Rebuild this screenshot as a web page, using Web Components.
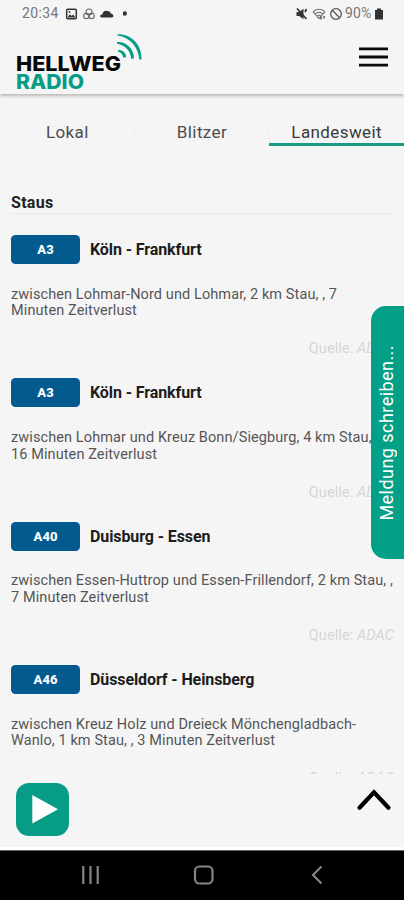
<!DOCTYPE html>
<html lang="de">
<head>
<meta charset="utf-8">
<meta name="viewport" content="width=device-width, initial-scale=1">
<title>Hellweg Radio</title>
<style>
  html, body { margin: 0; height: 100%; }
  body { background: #f5f5f5; overflow: hidden; font-family: Roboto, sans-serif; }
</style>
</head>
<body>
<radio-app></radio-app>

<script>
function define(name, html, setup) {
  const tpl = document.createElement('template');
  tpl.innerHTML = html;

  customElements.define(name, class extends HTMLElement {
    constructor() {
      super();
      this.attachShadow({ mode: 'open' }).appendChild(tpl.content.cloneNode(true));
    }

    connectedCallback() {
      if (setup) setup(this, this.shadowRoot);
    }
  });
}

define('status-bar', `
  <style>
    :host {
      display: flex;
      justify-content: space-between;
      box-sizing: border-box;
      height: 27px;
      padding: 0 20px 0 22px;
      font-size: 14px;
      line-height: 27px;
      color: #777;
    }
    div { display: flex; align-items: center; }
    svg { display: block; }
  </style>
  <div>
    <span style="width:37px;letter-spacing:.35px">20:34</span>
    <svg width="64" height="14" viewBox="0 0 64 14">
      <rect x="7.7" y="2.2" width="9.6" height="9.6" rx="1" fill="none" stroke="#333" stroke-width="1.5"/>
      <path d="M8.5 10.5 11 7.3l1.7 1.7 1.5-1.6 2.4 3.1z" fill="#333"/>
      <circle cx="10.5" cy="5" r=".9" fill="#333"/>
      <g fill="none" stroke="#666" stroke-width="1.1">
        <circle cx="30" cy="5" r="3"/><circle cx="27.4" cy="9" r="2.7"/><circle cx="32.6" cy="9" r="2.7"/>
      </g>
      <path d="M43 10.500c-3-.3-2-3 .5-3.300C44 4.300 46 3.200 48 4c2-.5 3.300.8 3.700 2.500 3 .5 3.800 4 1 4z" fill="#333"/>
    </svg>
    <svg width="6" height="14" viewBox="0 0 6 14"><circle cx="1.8" cy="6.500" r="2.200" fill="#333"/></svg>
  </div>
  <div>
    <svg width="48" height="14" viewBox="0 0 48 14">
      <path d="M.5 5h2.700L7.500 1.700v10.600L3.200 9H.5z" fill="#333"/>
      <path d="M1 1.500 10.500 12M9 5l1.500-3" stroke="#333" stroke-width="1.700"/>
      <g fill="none" stroke="#777" stroke-width="1.200">
        <path d="M17 4.600q6-4.700 12 0M19 7q4-3.200 8 0M21 9.200q2-1.500 4 0M17 4.600l6 7 6-7"/>
      </g>
      <path d="M25 9.500v3M28 9v2.500" stroke="#444" stroke-width="1.300"/>
      <circle cx="40" cy="7" r="5.300" fill="none" stroke="#555" stroke-width="1.300"/>
      <path d="m36.300 3.300 7.400 7.400" stroke="#555" stroke-width="1.300"/>
    </svg>
    <span style="padding-left:1px;width:29px;letter-spacing:.1px">90%</span>
    <svg width="10" height="14" viewBox="0 0 10 14"><path d="M1 3h2V1.500h4V3h2v9.500H1z" fill="#333"/></svg>
  </div>
`);

define('app-header', `
  <style>
    :host {
      display: flex;
      justify-content: space-between;
      box-sizing: border-box;
      height: 67px;
      padding: 0 16px;
      box-shadow: 0 2px 3px rgba(0, 0, 0, .25);
      clip-path: inset(0 0 -8px 0);
    }
    svg { display: block; }
    text { font-family: Inter, Roboto, sans-serif; font-weight: 800; }
    .menu { margin-top: 20px; }
  </style>
  <svg width="130" height="66" viewBox="16 27 130 66">
    <text x="16" y="71" font-size="20.500" textLength="105" lengthAdjust="spacingAndGlyphs" fill="#080808">HELLWEG</text>
    <text x="16" y="89.200" font-size="20" textLength="68" lengthAdjust="spacingAndGlyphs" fill="#079c85">RADIO</text>
    <g fill="#079c85">
      <path d="M117.500 34.200c13-.5 24.500 9.500 24 25.300h-2.200c-1-12.500-9-22-21.800-24z"/>
      <path d="M117 42c9-.7 17 6.500 17 16.500l-2.800.3C130.500 51 126 45.500 117 43.700z"/>
      <path d="M118 50c4.500-.5 8.300 3 8.200 7.200l-3 .2c-.4-3-2-4.900-5.200-6z"/>
    </g>
  </svg>
  <svg class="menu" width="29" height="20" viewBox="0 0 29 20">
    <path d="M0 1.900h29M0 10h29M0 18.200h29" stroke="#0a0a0a" stroke-width="2.800"/>
  </svg>
`);

define('tab-item', `
  <style>
    :host {
      display: block;
      flex: 1;
      box-sizing: border-box;
      height: 52px;
      padding-top: 28px;
      text-align: center;
      font-size: 17px;
      line-height: 20px;
      letter-spacing: .4px;
      color: #4c4c4c;
      border-bottom: 3px solid transparent;
      background: linear-gradient(#f0f0f0, #f0f0f0) right 34px / 1px 12px no-repeat;
    }
    :host([active]) { border-color: #159b84; color: #3a3a3a; background: none; }
  </style>
  <slot></slot>
`);

define('section-title', `
  <style>
    :host {
      display: block;
      box-sizing: border-box;
      height: 22px;
      margin: 46px 10px 21px 11px;
      border-bottom: 1px solid #e7e7e7;
      font-size: 16px;
      line-height: 21px;
      letter-spacing: .3px;
      font-weight: 700;
      color: #222;
    }
  </style>
  <slot></slot>
`);

define('traffic-report', `
  <style>
    :host { display: block; height: 143.300px; padding: 0 10px 0 11px; box-sizing: border-box; }
    header { display: flex; align-items: center; gap: 10px; height: 29px; }
    .road {
      width: 69px;
      height: 29px;
      border-radius: 4.500px;
      background: #035a8f;
      color: #fff;
      font-size: 13px;
      font-weight: 800;
      line-height: 29px;
      text-align: center;
    }
    .route { font-size: 16px; letter-spacing: -.1px; font-weight: 700; color: #1c1c1c; white-space: nowrap; }
    p {
      margin: 22.700px 0 0;
      font-size: 14.500px;
      line-height: 16.700px;
      height: 33.400px;
      letter-spacing: .1px;
      color: #555;
      white-space: nowrap;
    }
    .source { margin-top: 21.300px; font-size: 14.500px; letter-spacing: .1px; line-height: 16px; text-align: right; color: #d6d6d6; }
  </style>
  <header><div class="road"></div><div class="route"></div></header>
  <p><slot></slot></p>
  <div class="source">Quelle: <i>ADAC</i></div>
`, (el, root) => {
  root.querySelector('.road').textContent = el.getAttribute('road');
  root.querySelector('.route').textContent = el.getAttribute('route');
});

define('report-button', `
  <style>
    :host {
      position: absolute;
      right: 0;
      top: 306px;
      width: 33px;
      height: 253px;
      display: flex;
      align-items: center;
      justify-content: center;
      background: #03a088;
      border-radius: 15px 0 0 15px;
      color: #fff;
      font-size: 18px;
      letter-spacing: .45px;
    }
    span { writing-mode: vertical-rl; transform: rotate(180deg); white-space: nowrap; margin-right: 2px; }
  </style>
  <span><slot></slot></span>
`);

define('player-dock', `
  <style>
    :host {
      display: flex;
      justify-content: space-between;
      box-sizing: border-box;
      height: 76px;
      padding: 9px 11px 0 16px;
      border-bottom: 3px solid #fff;
    }
    .play { width: 53px; height: 53px; border-radius: 13px; background: #079c86; }
    .up { margin-top: 3px; }
    svg { display: block; }
  </style>
  <div class="play">
    <svg width="53" height="53"><path d="M16.300 12v28.500L42 26.200z" fill="#fff"/></svg>
  </div>
  <svg class="up" width="38" height="26"><path d="M4.500 21.800 19 6.300l14.500 15.500" fill="none" stroke="#000" stroke-width="4.200" stroke-linecap="round"/></svg>
`);

define('system-nav', `
  <style>
    :host { display: block; height: 50px; background: #000; border-top: 1px solid #666; box-sizing: border-box; }
    svg { display: block; }
  </style>
  <svg width="404" height="49" viewBox="0 851 404 49" fill="none" stroke="#858585" stroke-width="2.200">
    <path d="M83.300 866v18M90.500 866v18M97.700 866v18"/>
    <rect x="195" y="866.500" width="17.500" height="17" rx="4.500"/>
    <path d="m321.500 866.500-8.500 8.500 8.500 8.500"/>
  </svg>
`);

define('radio-app', `
  <style>
    :host { display: flex; flex-direction: column; height: 900px; width: 404px; position: relative; background: #f5f5f5; }
    nav { display: flex; }
    main { height: 680px; overflow: hidden; }
  </style>
  <status-bar></status-bar>
  <app-header></app-header>
  <main>
    <nav>
      <tab-item>Lokal</tab-item>
      <tab-item>Blitzer</tab-item>
      <tab-item active>Landesweit</tab-item>
    </nav>
    <section-title>Staus</section-title>
    <traffic-report road="A3" route="Köln - Frankfurt">zwischen Lohmar-Nord und Lohmar, 2 km Stau, , 7<br>Minuten Zeitverlust</traffic-report>
    <traffic-report road="A3" route="Köln - Frankfurt">zwischen Lohmar und Kreuz Bonn/Siegburg, 4 km Stau, ,<br>16 Minuten Zeitverlust</traffic-report>
    <traffic-report road="A40" route="Duisburg - Essen">zwischen Essen-Huttrop und Essen-Frillendorf, 2 km Stau, ,<br>7 Minuten Zeitverlust</traffic-report>
    <traffic-report road="A46" route="Düsseldorf - Heinsberg">zwischen Kreuz Holz und Dreieck Mönchengladbach-<br>Wanlo, 1 km Stau, , 3 Minuten Zeitverlust</traffic-report>
  </main>
  <player-dock></player-dock>
  <system-nav></system-nav>
  <report-button>Meldung schreiben...</report-button>
`);
</script>
</body>
</html>
